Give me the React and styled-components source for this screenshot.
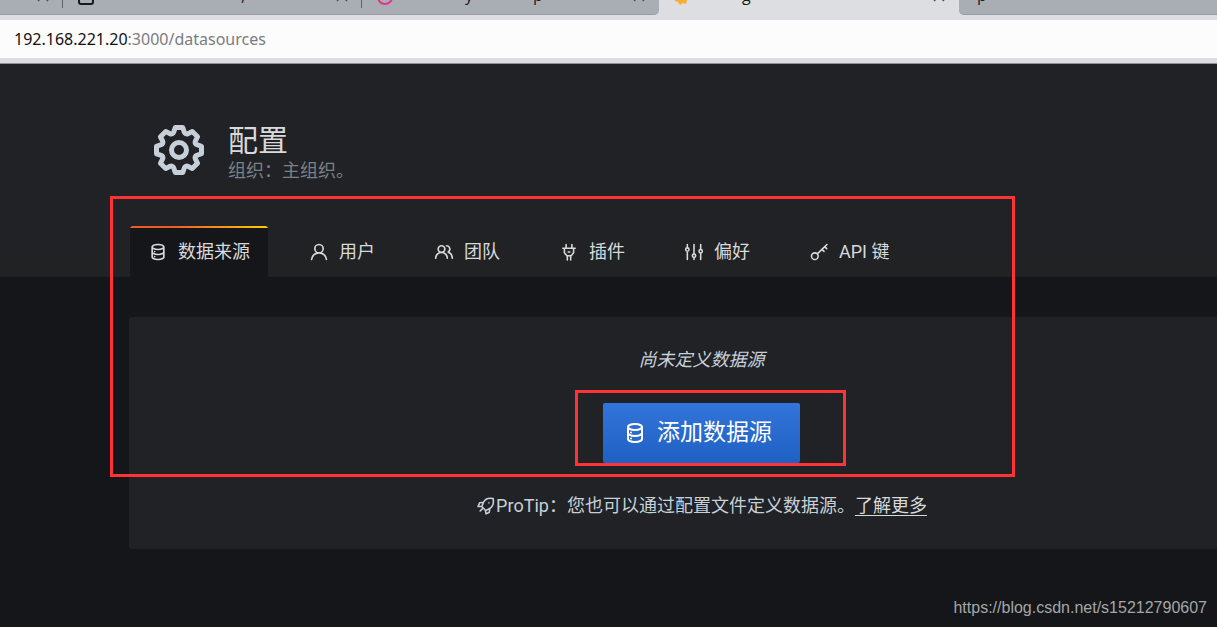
import React from "react"
import styled, { createGlobalStyle } from "styled-components"

const TABS = [
  { icon: "database", label: "数据来源", active: true },
  { icon: "user", label: "用户" },
  { icon: "users", label: "团队" },
  { icon: "plug", label: "插件" },
  { icon: "sliders", label: "偏好" },
  { icon: "key", label: "API 键" },
]

const FILLED = {
  cog: "M21.32,9.55l-1.89-.63.89-1.78A1,1,0,0,0,20.13,6L18,3.87a1,1,0,0,0-1.15-.19l-1.78.89-.63-1.89A1,1,0,0,0,13.5,2h-3a1,1,0,0,0-.95.68L8.92,4.57,7.14,3.68A1,1,0,0,0,6,3.87L3.87,6a1,1,0,0,0-.19,1.15l.89,1.78-1.89.63A1,1,0,0,0,2,10.5v3a1,1,0,0,0,.68.95l1.89.63-.89,1.78A1,1,0,0,0,3.87,18L6,20.13a1,1,0,0,0,1.15.19l1.78-.89.63,1.89a1,1,0,0,0,.95.68h3a1,1,0,0,0,.95-.68l.63-1.89,1.78.89A1,1,0,0,0,18,20.13L20.13,18a1,1,0,0,0,.19-1.15l-.89-1.78,1.89-.63A1,1,0,0,0,22,13.5v-3A1,1,0,0,0,21.32,9.55ZM20,12.78l-1.2.4A2,2,0,0,0,17.64,16l.57,1.14-1.1,1.1L16,17.64a2,2,0,0,0-2.79,1.16l-.4,1.2H11.22l-.4-1.2A2,2,0,0,0,8,17.64l-1.14.57-1.1-1.1L6.36,16A2,2,0,0,0,5.2,13.18L4,12.78V11.22l1.2-.4A2,2,0,0,0,6.36,8L5.79,6.89l1.1-1.1L8,6.36A2,2,0,0,0,10.82,5.2l.4-1.2h1.56l.4,1.2A2,2,0,0,0,16,6.36l1.14-.57,1.1,1.1L17.64,8a2,2,0,0,0,1.16,2.79l1.2.4ZM12,8a4,4,0,1,0,4,4A4,4,0,0,0,12,8Zm0,6a2,2,0,1,1,2-2A2,2,0,0,1,12,14Z",
  database:
    "M8,16.5a1,1,0,1,0,1,1A1,1,0,0,0,8,16.5ZM12,2C8,2,4,3.37,4,6V18c0,2.63,4,4,8,4s8-1.37,8-4V6C20,3.37,16,2,12,2Zm6,16c0,.71-2.28,2-6,2s-6-1.29-6-2V14.73A13.16,13.16,0,0,0,12,16a13.16,13.16,0,0,0,6-1.27Zm0-6c0,.71-2.28,2-6,2s-6-1.29-6-2V8.73A13.16,13.16,0,0,0,12,10a13.16,13.16,0,0,0,6-1.27ZM12,8C8.28,8,6,6.71,6,6s2.28-2,6-2,6,1.29,6,2S15.72,8,12,8ZM8,10.5a1,1,0,1,0,1,1A1,1,0,0,0,8,10.5Z",
  user: "M15.71,12.71a6,6,0,1,0-7.42,0,10,10,0,0,0-6.22,8.18,1,1,0,0,0,2,.22,8,8,0,0,1,15.9,0,1,1,0,0,0,1,.89h.11a1,1,0,0,0,.88-1.1A10,10,0,0,0,15.71,12.71ZM12,12a4,4,0,1,1,4-4A4,4,0,0,1,12,12Z",
  users:
    "M12.3,12.22A4.92,4.92,0,0,0,14,8.5a5,5,0,0,0-10,0,4.92,4.92,0,0,0,1.7,3.72A8,8,0,0,0,1,19.5a1,1,0,0,0,2,0,6,6,0,0,1,12,0,1,1,0,0,0,2,0A8,8,0,0,0,12.3,12.22ZM9,11.5a3,3,0,1,1,3-3A3,3,0,0,1,9,11.5Zm9.74.32A5,5,0,0,0,15,3.5a1,1,0,0,0,0,2,3,3,0,0,1,3,3,3,3,0,0,1-1.5,2.59,1,1,0,0,0-.5.84,1,1,0,0,0,.45.86l.39.26.13.07a7,7,0,0,1,4,6.38,1,1,0,0,0,2,0A9,9,0,0,0,18.74,11.82Z",
}

const STROKED = {
  plug: "M8.5 3v4M15.5 3v4M4.5 7.5h15M6.5 7.5V13l3 3.5h5l3-3.5V7.5M11 12h2M10 17v4.5M14 17v4.5",
  sliders:
    "M4 3v4M4 11v10M12 3v11.5M12 18.5V21M20 3v6M20 13v8M4 7a2 2 0 1 0 0 4 2 2 0 0 0 0-4zM12 14.5a2 2 0 1 0 0 4 2 2 0 0 0 0-4zM20 9a2 2 0 1 0 0 4 2 2 0 0 0 0-4z",
  key: "M7 13a4 4 0 1 0 0 8 4 4 0 0 0 0-8zM10 14.2L21.5 3M15.5 8.8l2.5 2.5M18.8 5.6L21.2 8",
  rocket:
    "M20.5 3c-5-1-9.5.5-11.5 4.5l-2 5 4.500 5 5-2.500C20.500 12.500 21.500 8 20.500 3zM9 7.500L4.500 8l-2 4.500H7M16.500 15l-.5 4.500-4 2-.5-4M7.500 15.500L5 18M15.500 8v.2",
}

const Icon = ({ name, size = 20 }) => (
  <Svg viewBox="0 0 24 24" $size={size} aria-hidden="true">
    {FILLED[name] ? (
      <path d={FILLED[name]} fill="currentColor" />
    ) : (
      <path
        d={STROKED[name]}
        fill="none"
        stroke="currentColor"
        strokeWidth="1.9"
        strokeLinecap="round"
        strokeLinejoin="round"
      />
    )}
  </Svg>
)

const CloseIcon = () => (
  <svg width="12" height="12" viewBox="0 0 12 12" aria-hidden="true">
    <path d="M1 1l10 10M11 1L1 11" stroke="#4d5156" strokeWidth="1.5" />
  </svg>
)

const App = () => {
  return (
    <>
      <GlobalStyle />
      <Browser>
        <TabStrip>
          <BrowserTab $width={63} $divider>
            <CloseIcon />
          </BrowserTab>
          <BrowserTab $width={299} $divider>
            <svg width="16" height="16" viewBox="0 0 16 16" aria-hidden="true">
              <rect x="1" y="1" width="14" height="14" rx="2" fill="none" stroke="#17191c" strokeWidth="2" />
            </svg>
            <TabTitle $indent={147}>,</TabTitle>
            <CloseIcon />
          </BrowserTab>
          <BrowserTab $width={297} $last>
            <svg width="16" height="16" viewBox="0 0 16 16" aria-hidden="true">
              <circle cx="8" cy="8" r="7" fill="none" stroke="#e2368a" strokeWidth="2" />
            </svg>
            <TabTitle $indent={72}>y</TabTitle>
            <TabTitle $indent={60}>p</TabTitle>
            <CloseIcon />
          </BrowserTab>
          <BrowserTab $width={300} $active>
            <svg width="16" height="16" viewBox="0 0 16 16" aria-hidden="true">
              <path
                d="M8 0l3 2 4 1-1 4 2 3-3 1-1 4-3-1-3 2-2-3-3-1V8L0 5l3-1 1-3z"
                fill="#fbae2c"
              />
            </svg>
            <TabTitle $indent={52}>g</TabTitle>
            <CloseIcon />
          </BrowserTab>
          <BrowserTab $rest>
            <TabTitle $indent={0}>p</TabTitle>
          </BrowserTab>
        </TabStrip>
        <AddressBar>
          <b>192.168.221.20</b>:3000/datasources
        </AddressBar>
      </Browser>

      <Page>
        <Header>
          <Heading>
            <Icon name="cog" size={60} />
            <div>
              <h1>配置</h1>
              <p>组织：主组织。</p>
            </div>
          </Heading>
          <Tabs>
            {TABS.map(tab => (
              <Tab href="#" key={tab.label} $active={tab.active}>
                <Icon name={tab.icon} />
                {tab.label}
              </Tab>
            ))}
          </Tabs>
        </Header>

        <Card>
          <EmptyText>尚未定义数据源</EmptyText>
          <Action>
            <AddButton type="button">
              <Icon name="database" size={24} />
              添加数据源
            </AddButton>
            <ActionMark />
          </Action>
          <ProTip>
            <Icon name="rocket" />
            ProTip：您也可以通过配置文件定义数据源。
            <a href="#">了解更多</a>
          </ProTip>
        </Card>
        <SectionMark />
        <Watermark>https://blog.csdn.net/s15212790607</Watermark>
      </Page>
    </>
  )
}

export default App

const GlobalStyle = createGlobalStyle`
  * {
    box-sizing: border-box;
  }

  body {
    margin: 0;
    background: #141619;
    color: #d8d9da;
    font-family: Roboto, "Noto Sans CJK SC", sans-serif;
    font-size: 18px;
    line-height: 26px;
    overflow-x: hidden;
  }
`

const Svg = styled.svg`
  flex: none;
  width: ${p => p.$size}px;
  height: ${p => p.$size}px;
`

const Browser = styled.div`
  background: #dcdee1;
  border-bottom: 1px solid #8f9297;
`

const TabStrip = styled.div`
  display: flex;
  height: 15px;
  overflow: hidden;
`

const BrowserTab = styled.div`
  position: relative;
  display: flex;
  align-items: flex-end;
  flex: ${p => (p.$rest ? "1" : "none")};
  width: ${p => (p.$rest ? "auto" : `${p.$width}px`)};
  height: 15px;
  padding: 0 14px 10px ${p => (p.$rest ? "18px" : "15px")};
  background: ${p => (p.$active ? "#dcdee1" : "#a9aeb5")};
  border-bottom: 1px solid ${p => (p.$active ? "#dcdee1" : "#999da3")};
  border-bottom-right-radius: ${p => (p.$last ? "5px" : "0")};
  border-bottom-left-radius: ${p => (p.$rest ? "5px" : "0")};

  > svg {
    flex: none;
  }

  > svg:first-child:not(:last-child) {
    margin-bottom: -1px;
  }

  > svg:last-child {
    margin-left: auto;
    margin-bottom: 2px;
  }

  &::after {
    content: "";
    display: ${p => (p.$divider ? "block" : "none")};
    position: absolute;
    top: 0;
    right: 0;
    width: 1px;
    height: 8px;
    background: #5f6368;
  }
`

const TabTitle = styled.span`
  margin-left: ${p => p.$indent}px;
  margin-bottom: -1px;
  color: #17191c;
  font-family: "Open Sans", sans-serif;
  font-size: 16px;
  line-height: 20px;
`

const AddressBar = styled.div`
  margin: 5px 0;
  padding: 0 14px;
  background: #fcfcfc;
  color: #7a7c80;
  font-family: "Noto Sans", sans-serif;
  font-size: 16px;
  line-height: 38px;

  b {
    color: #111;
    font-weight: 400;
  }
`

const Page = styled.main`
  position: relative;
  min-height: 563px;
  overflow: hidden;
`

const Header = styled.header`
  padding: 56px 0 0 130px;
  background: linear-gradient(#202226 60%, #212224);
  border-bottom: 1px solid #1d1f21;
`

const Heading = styled.div`
  display: flex;
  gap: 19px;
  padding-left: 19px;

  > svg {
    color: #c7d0d9;
  }

  h1 {
    margin: 0;
    font-size: 30px;
    font-weight: 400;
    line-height: 42px;
  }

  p {
    margin: 0;
    color: #7b8087;
    line-height: 18px;
  }
`

const Tabs = styled.nav`
  display: flex;
  gap: 23px;
  margin-top: 46px;
`

const Tab = styled.a`
  position: relative;
  display: flex;
  align-items: center;
  gap: 10px;
  height: 51px;
  margin-bottom: -1px;
  padding: 0 18px;
  border-radius: 3px 3px 0 0;
  background: ${p => (p.$active ? "#141619" : "transparent")};
  color: #d8d9da;
  text-decoration: none;
  overflow: hidden;

  &::before {
    content: "";
    display: ${p => (p.$active ? "block" : "none")};
    position: absolute;
    top: 0;
    left: 0;
    right: 0;
    height: 2px;
    background: linear-gradient(to right, #f05a28 30%, #fbca0a 99%);
  }
`

/* the card runs past the right edge of the window */
const Card = styled.section`
  display: flex;
  flex-direction: column;
  align-items: center;
  margin: 40px -57px 0 129px;
  padding: 30px 0;
  border-radius: 3px;
  background: #202226;
`

const EmptyText = styled.em`
  color: #c7d0d9;
`

const Action = styled.div`
  position: relative;
  margin: 30px 0;
`

const AddButton = styled.button`
  display: flex;
  align-items: center;
  gap: 10px;
  height: 60px;
  padding: 0 28px 0 20px;
  border: 0;
  border-radius: 2px;
  background: linear-gradient(#3274d9, #1f60c4);
  color: #fff;
  font-family: inherit;
  font-size: 23px;
  line-height: 30px;
`

const ProTip = styled.p`
  display: flex;
  align-items: center;
  margin: 0;
  color: #c7d0d9;

  a {
    color: #d8d9da;
    text-underline-offset: 3px;
  }
`

const Mark = styled.div`
  position: absolute;
  border: 3px solid #fe3434;
  pointer-events: none;
`

const ActionMark = styled(Mark)`
  inset: -13px -46px -3px -28px;
`

const SectionMark = styled(Mark)`
  top: 132px;
  left: 110px;
  width: 905px;
  height: 281px;
`

const Watermark = styled.div`
  position: absolute;
  right: 10px;
  bottom: 6px;
  color: #a5a6a8;
  font-family: "Liberation Sans", sans-serif;
  font-size: 16px;
`
